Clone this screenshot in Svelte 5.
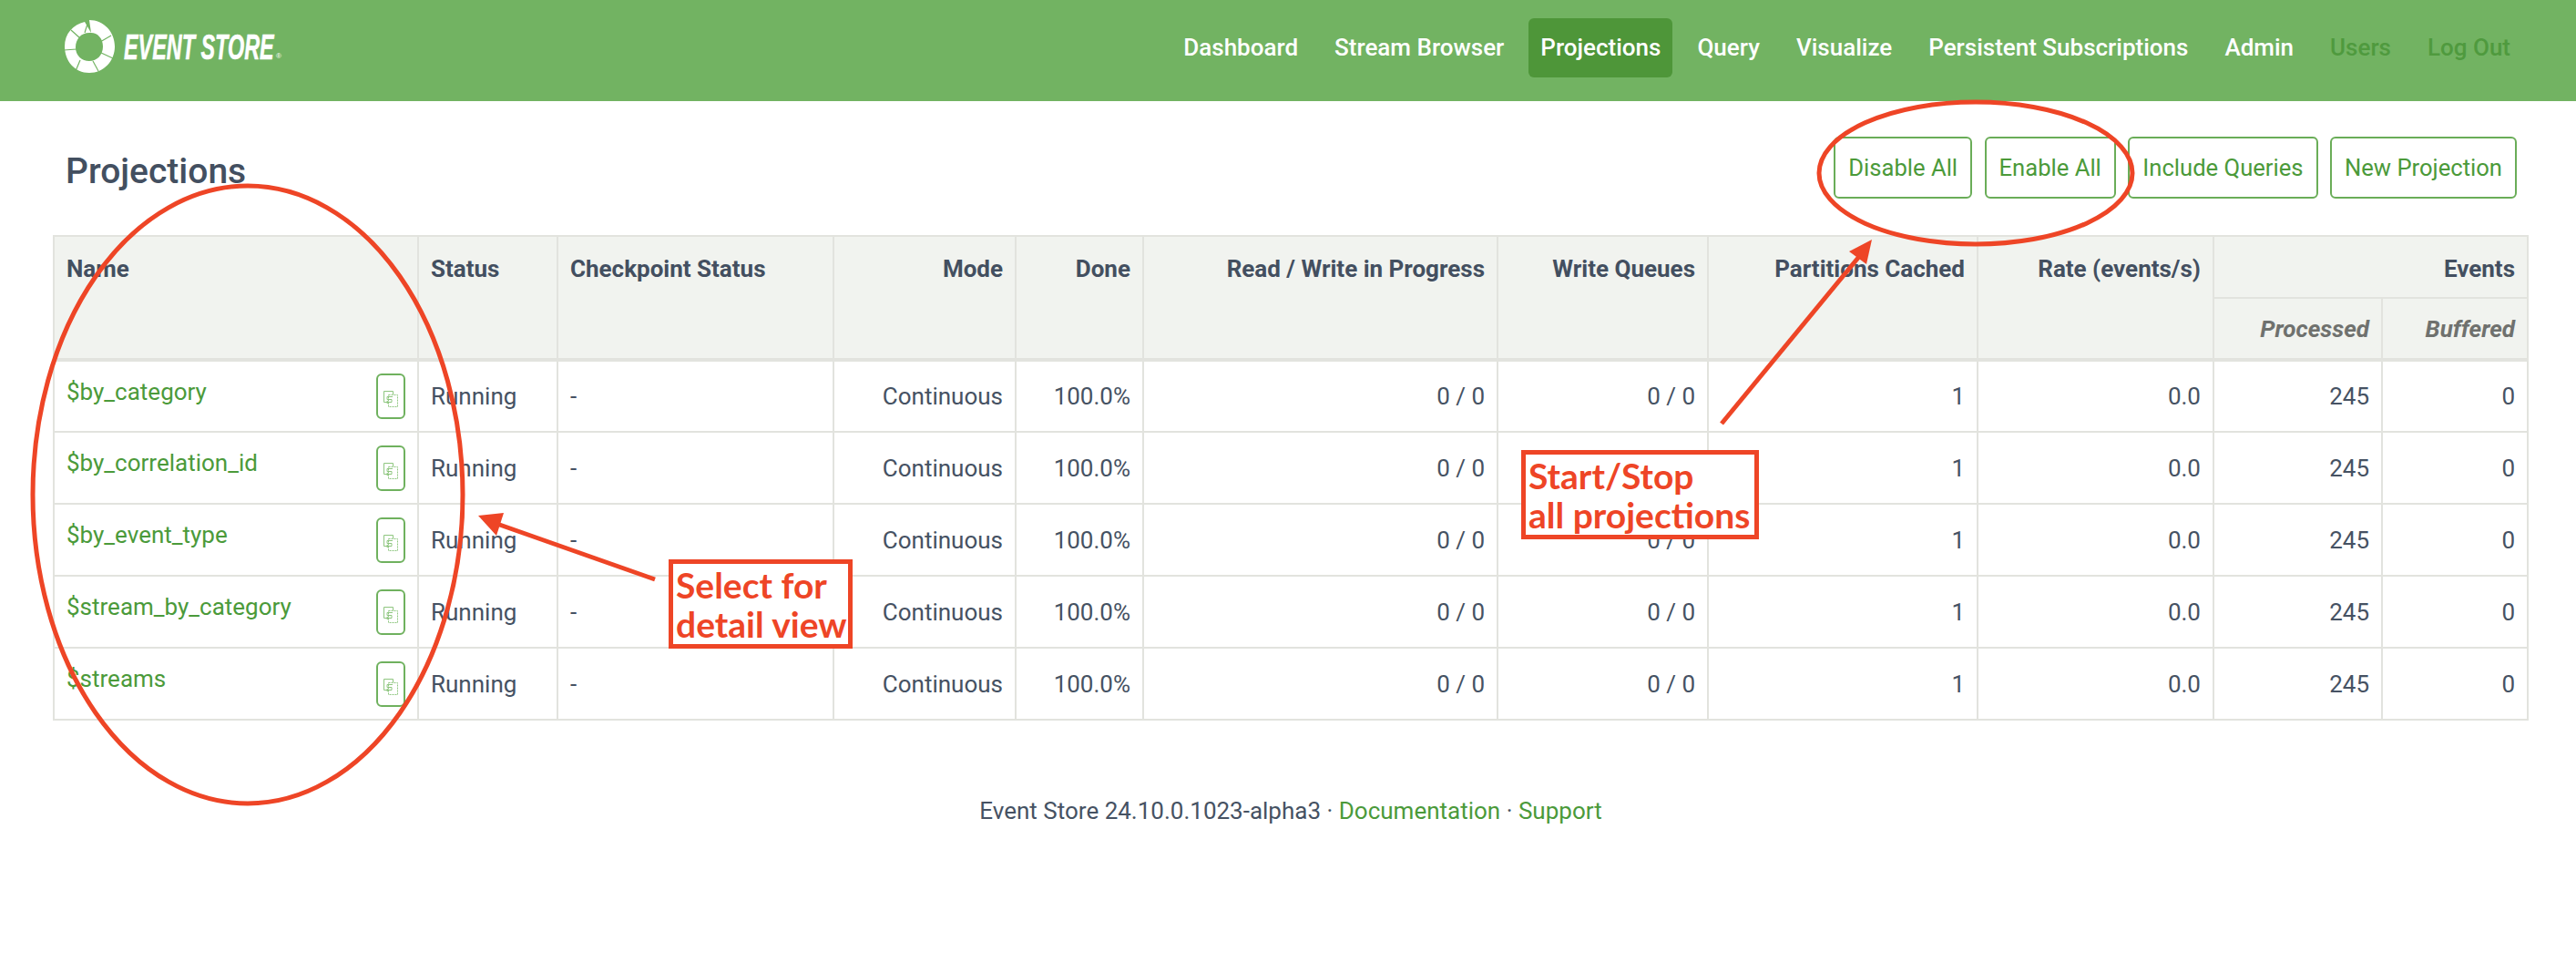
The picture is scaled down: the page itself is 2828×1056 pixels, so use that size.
<script>
  const nav = [
    { label: 'Dashboard' },
    { label: 'Stream Browser' },
    { label: 'Projections', active: true },
    { label: 'Query' },
    { label: 'Visualize' },
    { label: 'Persistent Subscriptions' },
    { label: 'Admin' },
    { label: 'Users', dim: true },
    { label: 'Log Out', dim: true }
  ];
  const actions = ['Disable All', 'Enable All', 'Include Queries', 'New Projection'];
  const projections = ['$by_category', '$by_correlation_id', '$by_event_type', '$stream_by_category', '$streams'];
  const columns = [400, 153, 303, 200, 140, 389, 231, 296, 259, 185, 160];
  const gaps = [
    [97, 23, 93, 36], [122, 39, 110, 46], [124, 64, 111, 58], [108, 78, 102, 67],
    [83, 78, 88, 66], [70, 55, 84, 54], [78, 33, 88, 42]
  ];
</script>

<div class="page">
  <header class="topbar">
    <a class="brand" href="#top" aria-label="Event Store">
      <svg class="mark" viewBox="68 18 60 66" width="60" height="66" aria-hidden="true">
        <path fill="#fff" fill-rule="evenodd" d="M98 22C114 22 126 35 126 51S114 80 98 80 71 67 71 51C71 37 80 27 93 24L100 36C90 35 83 42 83 52 83 61 90 67 98 67 107 67 113 60 113 51 113 42 107 36 100 36Z" />
        {#each gaps as g}
          <line x1={g[0]} y1={g[1]} x2={g[2]} y2={g[3]} stroke="#72b362" stroke-width="1.2" />
        {/each}
      </svg>
      <span class="wordmark">EVENT STORE</span>
      <span class="reg">®</span>
    </a>
    <nav class="menu">
      {#each nav as item}
        <a href="#top" class:active={item.active} class:dim={item.dim}>{item.label}</a>
      {/each}
    </nav>
  </header>

  <main class="content">
    <div class="titlebar">
      <h1>Projections</h1>
      <div class="actions">
        {#each actions as a}
          <button type="button">{a}</button>
        {/each}
      </div>
    </div>

    <table>
      <colgroup>
        {#each columns as w}
          <col style:width="{w}px" />
        {/each}
      </colgroup>
      <thead>
        <tr class="head1">
          <th rowspan="2">Name</th>
          <th rowspan="2">Status</th>
          <th rowspan="2">Checkpoint Status</th>
          <th rowspan="2" class="r">Mode</th>
          <th rowspan="2" class="r">Done</th>
          <th rowspan="2" class="r">Read / Write in Progress</th>
          <th rowspan="2" class="r">Write Queues</th>
          <th rowspan="2" class="r">Partitions Cached</th>
          <th rowspan="2" class="r">Rate (events/s)</th>
          <th colspan="2" class="r">Events</th>
        </tr>
        <tr class="head2">
          <th class="r sub">Processed</th>
          <th class="r sub">Buffered</th>
        </tr>
      </thead>
      <tbody>
        {#each projections as name}
          <tr>
            <td>
              <div class="namecell">
                <a href="#top">{name}</a>
                <button type="button" class="copy" aria-label="Copy {name}">
                  <svg viewBox="0 0 16 18" width="16" height="18" fill="none" stroke="#8fc680" stroke-width="1">
                    <path d="M10.5 4V.5H.5V12.5H5" />
                    <rect x="5.5" y="4.5" width="10" height="13" stroke-dasharray="2 1" />
                    <path d="M10 6.5H4V9.5H9V12.5H3M5 11L3 12.5 5 14" />
                  </svg>
                </button>
              </div>
            </td>
            <td>Running</td>
            <td>-</td>
            <td class="r">Continuous</td>
            <td class="r">100.0%</td>
            <td class="r">0 / 0</td>
            <td class="r">0 / 0</td>
            <td class="r">1</td>
            <td class="r">0.0</td>
            <td class="r">245</td>
            <td class="r">0</td>
          </tr>
        {/each}
      </tbody>
    </table>

    <footer class="foot">
      Event Store 24.10.0.1023-alpha3 · <a href="#top">Documentation</a> · <a href="#top">Support</a>
    </footer>
  </main>

  <svg class="marks" width="2828" height="1056" viewBox="0 0 2828 1056" aria-hidden="true">
    <ellipse cx="272" cy="543" rx="236" ry="339" fill="none" stroke="#ee4526" stroke-width="5" />
    <ellipse cx="2169" cy="190" rx="172" ry="78" fill="none" stroke="#ee4526" stroke-width="5" />
    <line x1="1890" y1="465" x2="2044" y2="278" stroke="#ee4526" stroke-width="5" />
    <polygon points="2055,263 2030,276 2049,290" fill="#ee4526" />
    <line x1="719" y1="636" x2="540" y2="573" stroke="#ee4526" stroke-width="5" />
    <polygon points="525,566 553,563 545,588" fill="#ee4526" />
  </svg>

  <div class="note select">Select for<br />detail view</div>
  <div class="note startstop">Start/Stop<br />all projections</div>
</div>

<style>
  :global(body) {
    margin: 0;
    background: #fff;
  }
  .page {
    position: relative;
    width: 2828px;
    height: 1056px;
    overflow: hidden;
    font-family: Roboto, "Liberation Sans", sans-serif;
    font-size: 26px;
    color: #465263;
  }
  a {
    text-decoration: none;
    color: #4b9a3a;
  }
  .topbar {
    height: 111px;
    background: #72b362;
    display: flex;
    align-items: flex-start;
    justify-content: space-between;
    padding: 20px 59px 0 68px;
    box-sizing: border-box;
  }
  .brand {
    display: flex;
    align-items: flex-start;
    margin-top: -2px;
    color: #fff;
    position: relative;
    width: 250px;
  }
  .mark {
    flex: none;
  }
  .wordmark {
    display: block;
    margin: 12px 0 0 8px;
    font-family: "Liberation Sans", sans-serif;
    font-weight: 700;
    font-style: italic;
    font-size: 39px;
    line-height: 44px;
    white-space: nowrap;
    -webkit-text-stroke: 0.6px #fff;
    transform: scaleX(0.6);
    transform-origin: left top;
  }
  .reg {
    position: absolute;
    left: 235px;
    top: 39px;
    font-size: 8px;
    line-height: 10px;
    font-family: "Liberation Sans", sans-serif;
  }
  .menu {
    display: flex;
    gap: 14px;
  }
  .menu a {
    display: block;
    height: 65px;
    line-height: 65px;
    padding: 0 13px;
    border-radius: 6px;
    color: #fff;
    font-weight: 500;
    white-space: nowrap;
  }
  .menu a.active {
    background: #4e9639;
  }
  .menu a.dim {
    color: #4f9a3e;
  }
  .content {
    padding: 0 52px 0 58px;
  }
  .titlebar {
    height: 147px;
    display: flex;
    align-items: flex-start;
    justify-content: space-between;
    padding: 39px 13px 0 14px;
    box-sizing: border-box;
  }
  h1 {
    margin: 10px 0 0;
    font-size: 39px;
    line-height: 56px;
    font-weight: 500;
    color: #434f60;
  }
  .actions {
    display: flex;
    gap: 13.5px;
  }
  .actions button {
    height: 68px;
    padding: 0 14px;
    background: #fff;
    border: 2px solid #6aad58;
    border-radius: 6px;
    color: #4b9a3a;
    font-family: inherit;
    font-size: 25.6px;
    white-space: nowrap;
  }
  table {
    width: 2716px;
    table-layout: fixed;
    border-collapse: collapse;
  }
  th,
  td {
    border: 2px solid #e2e3de;
    padding: 0 13px;
    white-space: nowrap;
    text-align: left;
  }
  th {
    background: #f1f3ef;
    font-weight: 700;
    vertical-align: top;
    line-height: 30px;
    padding-top: 20px;
    color: #434f60;
  }
  thead tr:last-child th,
  th[rowspan] {
    border-bottom-width: 4px;
  }
  .head1 {
    height: 68px;
  }
  .head2 {
    height: 68px;
  }
  th.sub {
    font-style: italic;
    color: #6f716e;
    padding-top: 18px;
  }
  .r {
    text-align: right;
  }
  tbody tr {
    height: 79px;
  }
  td {
    vertical-align: middle;
  }
  .namecell {
    display: flex;
    align-items: center;
    justify-content: space-between;
    padding-right: 0;
  }
  .namecell a {
    margin-bottom: 11px;
  }
  .copy {
    display: flex;
    align-items: flex-end;
    justify-content: center;
    width: 32px;
    height: 50px;
    padding: 0 0 11px;
    background: #fff;
    border: 2px solid #6fb15e;
    border-radius: 6px;
    box-sizing: border-box;
  }
  .foot {
    margin-top: 84px;
    text-align: center;
    line-height: 30px;
  }
  .marks {
    position: absolute;
    top: 0;
    left: 0;
    pointer-events: none;
  }
  .note {
    position: absolute;
    box-sizing: border-box;
    background: #fff;
    border: 5px solid #ee4526;
    color: #ee4526;
    font-family: Lato, "Open Sans", sans-serif;
    font-weight: 700;
    font-size: 39px;
    line-height: 43px;
    padding: 2px 0 0 3px;
    white-space: nowrap;
  }
  .select {
    left: 734px;
    top: 614px;
    width: 202px;
    height: 98px;
  }
  .startstop {
    left: 1670px;
    top: 494px;
    width: 261px;
    height: 98px;
  }
</style>
